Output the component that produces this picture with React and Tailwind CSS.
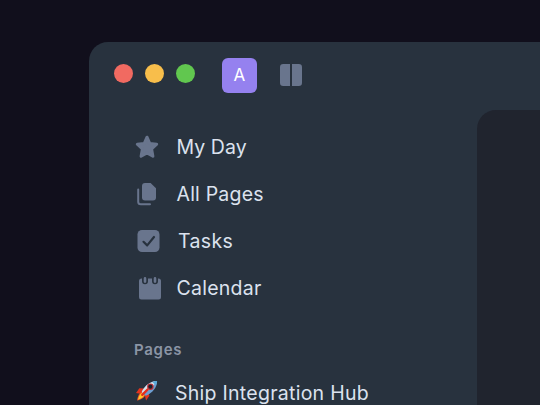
import React from "react";

function StarIcon() {
  return (
    <svg width="24" height="24" viewBox="0 0 24 24" className="block fill-[#69758d] stroke-[#69758d]">
      <path d="M12 2.200 14.700 8.400 21.700 9.200 16.600 14 17.900 21.200 12 18 6.100 21.200 7.400 14 2.300 9.200 9.300 8.400Z" strokeWidth="3" strokeLinejoin="round" />
    </svg>
  );
}

function PagesIcon() {
  return (
    <svg width="24" height="24" viewBox="0 0 24 24" className="block">
      <path d="M9 1h5.600L20 6.200V15.500a3 3 0 0 1-3 3H9a3 3 0 0 1-3-3V4a3 3 0 0 1 3-3Z" fill="#69758d" />
      <path d="M2.200 7.500v12.200a2.600 2.600 0 0 0 2.600 2.600H14" fill="none" stroke="#69758d" strokeWidth="2" strokeLinecap="round" />
    </svg>
  );
}

function TasksIcon() {
  return (
    <svg width="24" height="24" viewBox="0 0 24 24" className="block">
      <rect x=".5" y="1" width="22" height="22" rx="4.500" fill="#69758d" />
      <path d="m6.500 12.800 3.700 3.600L17 8" fill="none" stroke="#28323e" strokeWidth="2.200" strokeLinecap="round" strokeLinejoin="round" />
    </svg>
  );
}

function CalendarIcon() {
  return (
    <svg width="24" height="24" viewBox="0 0 24 24" className="block">
      <rect x="1" y="2.500" width="22" height="21" rx="2.500" fill="#69758d" />
      <path d="M7 0v5.200M17 0v5.200" stroke="#28323e" strokeWidth="6" strokeLinecap="round" />
      <path d="M7 2.400v3.200M17 2.400v3.200" stroke="#69758d" strokeWidth="2.600" strokeLinecap="round" />
    </svg>
  );
}

function SplitIcon() {
  return (
    <svg width="22" height="22" viewBox="0 0 22 22" className="block fill-[#69758d]">
      <path d="M3.200 0H10v22H3.200A3.200 3.200 0 0 1 0 18.800V3.200A3.200 3.200 0 0 1 3.200 0ZM12 0h6.800A3.200 3.200 0 0 1 22 3.200v15.600a3.200 3.200 0 0 1-3.200 3.200H12Z" />
    </svg>
  );
}

function RocketIcon() {
  return (
    <svg width="23" height="22" viewBox="0 0 24 22" className="block">
      <path d="M9 8.500 3.500 8 0 13l6 1Z" fill="#e3331d" />
      <path d="m13 13 1 3-3.500 5-1.200-5Z" fill="#e3331d" />
      <path d="M6 12c-3 1-4 4.500-5 9 4-1 7.500-2.500 8.500-5.500Z" fill="#ef5024" />
      <path d="M6.500 12.500C4 14 3 16.500 2 20c3.500-1 6-2.500 7-5Z" fill="#ffc82b" />
      <path d="M22 .500C16 .500 9 5 6 12l4 4C17 13 22 7.500 22 .500Z" fill="#6f9ed0" />
      <path d="M22 .500C16 .500 9 5 6 12l1.500 1.500C12 11 18 6 22 .500Z" fill="#d9e2ea" />
      <path d="M17 1.500 20.700 5C22 2.500 22 .500 22 .500S19 .500 17 1.500Z" fill="#58a9da" />
      <circle cx="15" cy="6.500" r="3.400" fill="#bd3038" />
      <circle cx="15" cy="6.500" r="2.200" fill="#19212d" />
      <path d="m12 9.500-5.500 5.500" stroke="#e52d1c" strokeWidth="2.400" strokeLinecap="round" />
    </svg>
  );
}

function NavItem({ icon, label, className }) {
  return (
    <li className={`flex h-[47px] items-center ${className}`}>
      {icon}
      <span className="mt-px">{label}</span>
    </li>
  );
}

export default function App() {
  return (
    <div className="h-[405px] w-[540px] overflow-hidden bg-[#110f1c] pl-[89px] pt-[42px] font-['Inter',sans-serif]">
      <div className="h-[363px] w-[451px] rounded-tl-[19px] bg-[#28323e]">
        <header className="flex h-[68px] items-start pl-[24.500px]">
          <div className="mt-[22px] flex gap-[12.300px]">
            <span className="size-[19px] rounded-full bg-[#f16a61]" />
            <span className="size-[19px] rounded-full bg-[#f8be4b]" />
            <span className="size-[19px] rounded-full bg-[#61c74f]" />
          </div>
          <div className="ml-[26.900px] mt-[15.600px] flex size-[35px] items-center justify-center rounded-[6px] bg-[#9581ef] pt-px text-[17px] font-normal text-white">A</div>
          <div className="ml-[22.800px] mt-[22px]"><SplitIcon /></div>
        </header>
        <div className="flex h-[295px]">
          <aside className="w-[388px] pt-[13.500px]">
            <ul className="text-[19.500px] text-[#dce2ee]">
              <NavItem className="gap-[17.500px] pl-[46px] tracking-[0.050px]" icon={<StarIcon />} label="My Day" />
              <NavItem className="gap-[17px] pl-[46.500px] tracking-[0.200px]" icon={<PagesIcon />} label="All Pages" />
              <NavItem className="gap-[17.500px] pl-[47.500px] tracking-[0.350px]" icon={<TasksIcon />} label="Tasks" />
              <NavItem className="gap-[15px] pl-[48.500px] tracking-[0.250px]" icon={<CalendarIcon />} label="Calendar" />
            </ul>
            <h2 className="mt-[27px] pl-[45px] text-[15px] font-semibold leading-[22px] tracking-[0.700px] text-[#8b95a5]">Pages</h2>
            <div className="mt-[17.500px] flex h-[32px] items-center gap-[16.500px] pl-[46.500px] text-[19.500px] tracking-[0.270px] text-[#dce2ee]">
              <div className="-mt-[6px]"><RocketIcon /></div>
              <span className="whitespace-nowrap">Ship Integration Hub</span>
            </div>
          </aside>
          <main className="flex-1 rounded-tl-[19px] bg-[#20242e]" />
        </div>
      </div>
    </div>
  );
}
